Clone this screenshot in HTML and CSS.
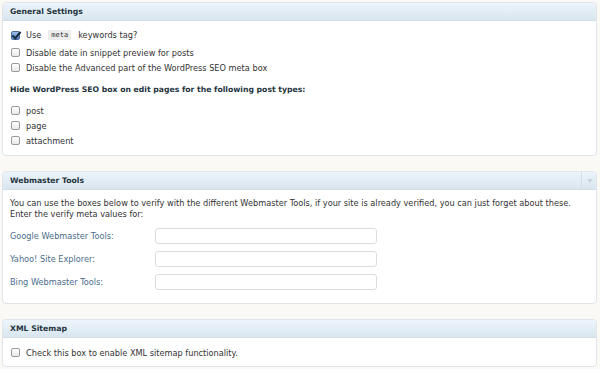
FILE: index.html
```html
<!DOCTYPE html>
<html lang="en">
<head>
    <meta charset="UTF-8">
    <title>WordPress SEO Settings</title>
    <link rel="stylesheet" href="styles.css">
</head>
<body>
    <div class="wrap">
        <!-- General Settings -->
        <div class="postbox">
            <h3 class="hndle">General Settings</h3>
            <div class="inside general">
                <label class="check"><input type="checkbox" checked> Use <code>meta</code> keywords tag?</label>
                <label class="check"><input type="checkbox"> Disable date in snippet preview for posts</label>
                <label class="check"><input type="checkbox"> Disable the Advanced part of the WordPress SEO meta box</label>
                <p class="subhead">Hide WordPress SEO box on edit pages for the following post types:</p>
                <label class="check"><input type="checkbox"> post</label>
                <label class="check"><input type="checkbox"> page</label>
                <label class="check"><input type="checkbox"> attachment</label>
            </div>
        </div>

        <!-- Webmaster Tools -->
        <div class="postbox">
            <h3 class="hndle">Webmaster Tools <span class="handlediv"></span></h3>
            <div class="inside tools">
                <p class="intro">You can use the boxes below to verify with the different Webmaster Tools, if your site is already verified, you can just forget about these.<br>Enter the verify meta values for:</p>
                <div class="field">
                    <label for="google">Google Webmaster Tools:</label>
                    <input type="text" id="google">
                </div>
                <div class="field">
                    <label for="yahoo">Yahoo! Site Explorer:</label>
                    <input type="text" id="yahoo">
                </div>
                <div class="field">
                    <label for="bing">Bing Webmaster Tools:</label>
                    <input type="text" id="bing">
                </div>
            </div>
        </div>

        <!-- XML Sitemap -->
        <div class="postbox">
            <h3 class="hndle">XML Sitemap</h3>
            <div class="inside">
                <label class="check"><input type="checkbox"> Check this box to enable XML sitemap functionality.</label>
            </div>
        </div>
    </div>
</body>
</html>
```

FILE: styles.css
```css
* {
    margin: 0;
    padding: 0;
    box-sizing: border-box;
}

body {
    font-family: "DejaVu Sans", Verdana, sans-serif;
    font-size: 8.2px;
    color: #333;
    background: #faf9f5;
}

.wrap {
    padding: 2px 3px 0 2px;
}

.postbox {
    background: #fff;
    border: 1px solid #dfe5e9;
    border-radius: 4px;
    margin-bottom: 15px;
    overflow: hidden;
}

.hndle {
    position: relative;
    height: 18px;
    line-height: 18px;
    padding: 0 7px;
    font-size: 7.7px;
    font-weight: bold;
    color: #24343e;
    background: linear-gradient(to bottom, #edf4fb 0%, #d9e6ef 100%);
    border-bottom: 1px solid #d2dde5;
}

.handlediv {
    position: absolute;
    top: 0;
    right: 0;
    width: 15px;
    height: 18px;
    border-left: 1px solid #d3dee6;
}

.handlediv::after {
    content: "";
    position: absolute;
    top: 7px;
    left: 5px;
    border-left: 3px solid transparent;
    border-right: 3px solid transparent;
    border-top: 4px solid #c9d4dc;
}

.inside {
    padding: 7px 7px 6px;
}

.inside.general {
    padding: 4px 7px 7px;
}

.inside.tools {
    padding: 7px 7px 10px;
}

.check {
    display: flex;
    align-items: center;
    gap: 6px;
    height: 15px;
}

.check input {
    appearance: none;
    width: 9px;
    height: 9px;
    border: 1px solid #9a9a9a;
    border-radius: 2px;
    background: linear-gradient(to bottom, #fff, #e9e9e9);
    margin-left: 1px;
    flex: none;
}

.check input:checked {
    border-color: #4a6c9a;
    background: linear-gradient(to bottom, #9cc0ec, #4f83c9);
    position: relative;
}

.check input:checked::after {
    content: "";
    position: absolute;
    left: 2px;
    top: -2px;
    width: 3px;
    height: 7px;
    border: solid #1d2b3d;
    border-width: 0 2px 2px 0;
    transform: rotate(40deg);
}

.general .check:first-child {
    height: 20px;
}

code {
    font-family: "DejaVu Sans Mono", monospace;
    font-size: 7px;
    background: #ececec;
    padding: 1px 3px;
    margin: 0 1px;
}

.subhead {
    font-weight: bold;
    font-size: 7.7px;
    color: #24343e;
    margin: 10px 0 9px;
}

.intro {
    line-height: 11px;
    margin: 1px 0 4px;
}

.field {
    display: flex;
    align-items: center;
    height: 23px;
}

.field label {
    width: 145px;
    color: #4a6d8a;
}

.field input {
    width: 222px;
    height: 16px;
    border: 1px solid #dcdcdc;
    border-radius: 3px;
    background: #fff;
}
```
